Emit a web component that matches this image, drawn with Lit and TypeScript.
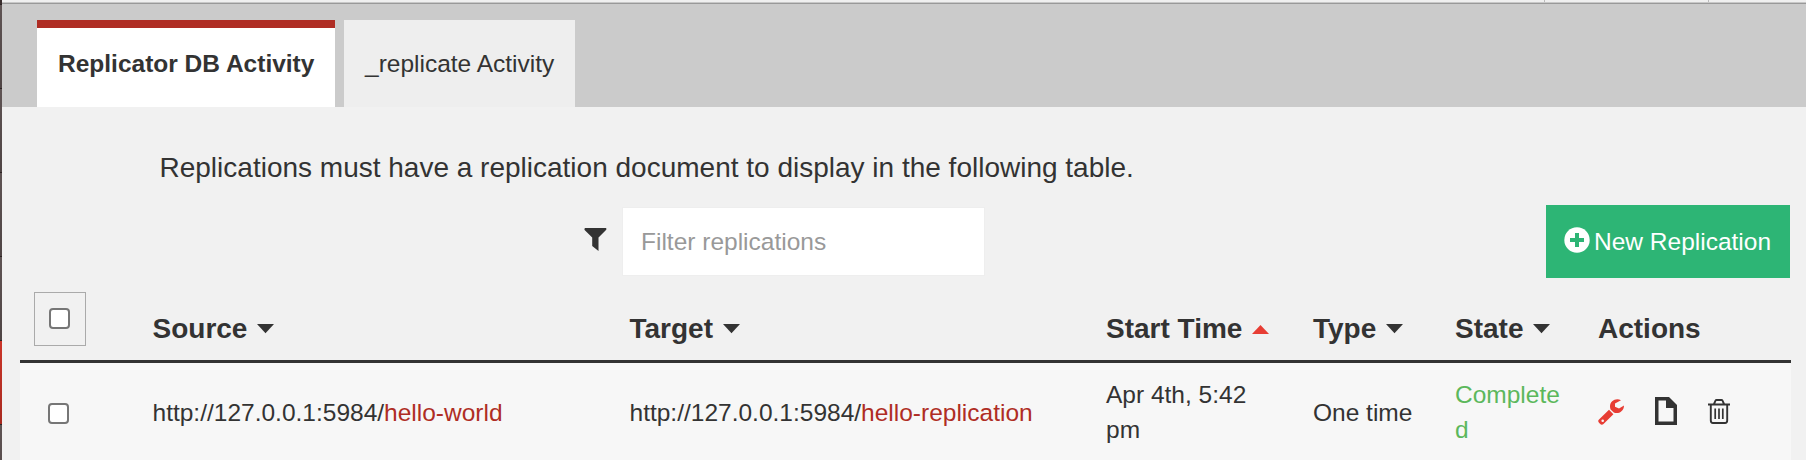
import { LitElement, html, css, nothing } from "lit";
import { customElement, property } from "lit/decorators.js";

@customElement("sort-caret")
class SortCaret extends LitElement {
  @property({ type: Boolean, reflect: true }) up = false;

  static styles = css`
    :host { display: block; width: 17px; height: 10px; margin-left: 10px; color: #333; }
    :host([up]) { color: #e73d34; }
    svg { display: block; }
  `;

  render() {
    const d = this.up ? "M0 10 L8.5 1 L17 10 Z" : "M0 0 H17 L8.5 9.3 Z";
    return html`<svg width="17" height="10" viewBox="0 0 17 10"><path fill="currentColor" d=${d} /></svg>`;
  }
}

@customElement("app-root")
class AppRoot extends LitElement {
  columns = [
    { label: "Source", sort: "down" },
    { label: "Target", sort: "down" },
    { label: "Start Time", sort: "up" },
    { label: "Type", sort: "down" },
    { label: "State", sort: "down" },
    { label: "Actions", sort: "" },
  ];

  rows = [
    {
      host: "http://127.0.0.1:5984/",
      source: "hello-world",
      target: "hello-replication",
      start: "Apr 4th, 5:42 pm",
      type: "One time",
      state: "Completed",
    },
  ];

  static styles = css`
    :host {
      display: flex;
      height: 460px;
      overflow: hidden;
      background: #f1f1f1;
      color: #333;
      font: 24.5px/35px "Liberation Sans", Arial, sans-serif;
    }
    * { box-sizing: border-box; }
    svg { display: block; flex: none; }
    .nav { flex: none; width: 2px; height: 460px; overflow: hidden; display: flex; flex-direction: column; }
    .nav-item { flex: none; height: 84px; background: linear-gradient(#5f5454, #4f4545); border-bottom: 1px solid #2c2323; }
    .nav-item.cut { height: 5px; background: #3a2e2e; }
    .nav-item.active { background: linear-gradient(#cb3529, #a82a20); }
    .page { flex: 1; min-width: 0; }
    .topbar { height: 4px; background: #f0f0f0; border-bottom: 1px solid #999; box-shadow: inset 0 -1px #c8c8c8; display: flex; justify-content: flex-end; }
    .cell { height: 2px; border-left: 1px solid #bbb; }
    .cell.wide { width: 164px; }
    .cell.narrow { width: 98px; }
    .tabs { height: 103px; padding: 16px 0 0 35px; background: #cbcbcb; display: flex; gap: 9px; }
    .tab { height: 87px; background: #eee; padding: 26px 0 0 21px; white-space: nowrap; width: 231px; }
    .tab.active { width: 298px; background: #fff; font-weight: bold; border-top: 8px solid #af2d24; padding-top: 18px; }
    .note { margin: 0; padding: 41px 0 0 157.5px; height: 98px; font-size: 28px; line-height: 40px; white-space: nowrap; }
    .toolbar { display: flex; height: 73px; padding: 0 16px 0 582px; }
    .funnel { margin-top: 23px; }
    .filter {
      width: 363px; height: 69px; margin: 2px 0 0 15px; padding: 0 0 0 18px; border: 1px solid #eee;
      background: #fff; font: inherit; color: #333; outline: none; border-radius: 0;
    }
    .filter::placeholder { color: #999; opacity: 1; }
    .new { margin-left: auto; width: 244px; height: 73px; padding: 0 0 0 18px; border: 0; background: #2db575; color: #fff; font: inherit; display: flex; align-items: center; gap: 4px; white-space: nowrap; }
    .new svg { margin-top: -4px; }
    .table { margin: 0 15px 0 18px; }
    .row { display: grid; grid-template-columns: 132.5px 477px 476.5px 207px 142px 143px 1fr; }
    .head { height: 85px; border-bottom: 3px solid #333; font-size: 28px; font-weight: bold; line-height: 40px; }
    .th { display: flex; align-items: center; padding-top: 19px; white-space: nowrap; }
    .all { margin: 14px 0 0 14px; width: 52px; height: 54px; border: 1px solid #aaa; padding: 15px 0 0 14px; }
    .check { appearance: none; display: block; margin: 0; width: 21px; height: 21px; border: 2px solid #767676; border-radius: 4px; background: #fff; }
    .body { height: 97px; padding-top: 1px; background: #f7f7f7; align-items: center; }
    .pick { padding-left: 28px; }
    .body .check { margin-top: 3px; }
    .link { color: #af2d24; text-decoration: none; }
    .start { width: 150px; }
    .state { color: #5cb85c; width: 108px; word-break: break-all; }
    .actions { display: flex; align-items: center; }
    .file { margin-left: 31px; margin-top: -3px; }
    .trash { margin-left: 31px; margin-top: -2px; }
  `;

  render() {
    return html`
      <div class="nav">
        <div class="nav-item cut"></div>
        ${[0, 1, 2, 3, 4, 5].map((i) => html`<div class="nav-item ${i === 4 ? "active" : ""}"></div>`)}
      </div>
      <div class="page">
        <div class="topbar"><div class="cell wide"></div><div class="cell narrow"></div></div>
        <div class="tabs">
          <div class="tab active">Replicator DB Activity</div>
          <div class="tab">_replicate Activity</div>
        </div>
        <p class="note">Replications must have a replication document to display in the following table.</p>
        <div class="toolbar">
          <svg class="funnel" width="23" height="24" viewBox="0 0 23 24">
            <path fill="#333" d="M1 0 H22 Q23 1 22 2 L14.5 9.5 V23 L8.2 18 V9.5 L.6 2 Q0 1 1 0 Z" />
          </svg>
          <input class="filter" placeholder="Filter replications" />
          <button class="new">
            <svg width="26" height="26" viewBox="0 0 26 26">
              <circle cx="13" cy="13" r="12.7" fill="#fff" />
              <path fill="#2db575" d="M11 6 H15 V11 H20 V15 H15 V20 H11 V15 H6 V11 H11 Z" />
            </svg>
            <span>New Replication</span>
          </button>
        </div>
        <div class="table">
          <div class="row head">
            <div><div class="all"><input class="check" type="checkbox" /></div></div>
            ${this.columns.map(
              (c) => html`<div class="th">
                ${c.label}${c.sort ? html`<sort-caret ?up=${c.sort === "up"}></sort-caret>` : nothing}
              </div>`
            )}
          </div>
          ${this.rows.map(
            (r) => html`<div class="row body">
              <div class="pick"><input class="check" type="checkbox" /></div>
              <div>${r.host}<a class="link">${r.source}</a></div>
              <div>${r.host}<a class="link">${r.target}</a></div>
              <div class="start">${r.start}</div>
              <div>${r.type}</div>
              <div class="state">${r.state}</div>
              <div class="actions">
                <svg width="26" height="26" viewBox="0 0 26 26">
                  <path fill="#e73d34" fill-rule="evenodd" d="M11 10.8 L15.4 15.2 L5.5 24.9 Q3.8 26.5 2 24.8 L1 23.8 Q-.6 22 1 20.4 Z M4.7 20.4 A1.3 1.3 0 1 0 4.7 23 A1.3 1.3 0 1 0 4.7 20.4 Z" />
                  <path fill="#e73d34" d="M23 1.3 C18 -1.5 12 2 12 7.5 C12 8.6 12.2 9.5 12.6 10.4 L15.8 13.6 C20.5 15.5 26 12 26 6.4 L21 9.6 L17 7.8 V4.6 Z" />
                </svg>
                <svg class="file" width="22" height="28" viewBox="0 0 22 28">
                  <path fill="#333" fill-rule="evenodd" d="M0 0 H14 L22 8 V28 H0 Z M3.5 3.5 V24.5 H18.5 V11 H11 V3.5 Z" />
                </svg>
                <svg class="trash" width="22" height="25" viewBox="0 0 22 25">
                  <g fill="none" stroke="#333" stroke-width="1.9">
                    <path d="M0 5.5 H22 M6 5 L7.5 1.6 Q7.8 1 8.5 1 H13.5 Q14.2 1 14.5 1.6 L16 5" />
                    <path d="M2.8 5.5 V21.5 Q2.8 24 5 24 H17 Q19.2 24 19.2 21.5 V5.5" />
                    <path d="M7.2 9.5 V20 M11 9.5 V20 M14.8 9.5 V20" stroke-width="1.7" />
                  </g>
                </svg>
              </div>
            </div>`
          )}
        </div>
      </div>
    `;
  }
}
